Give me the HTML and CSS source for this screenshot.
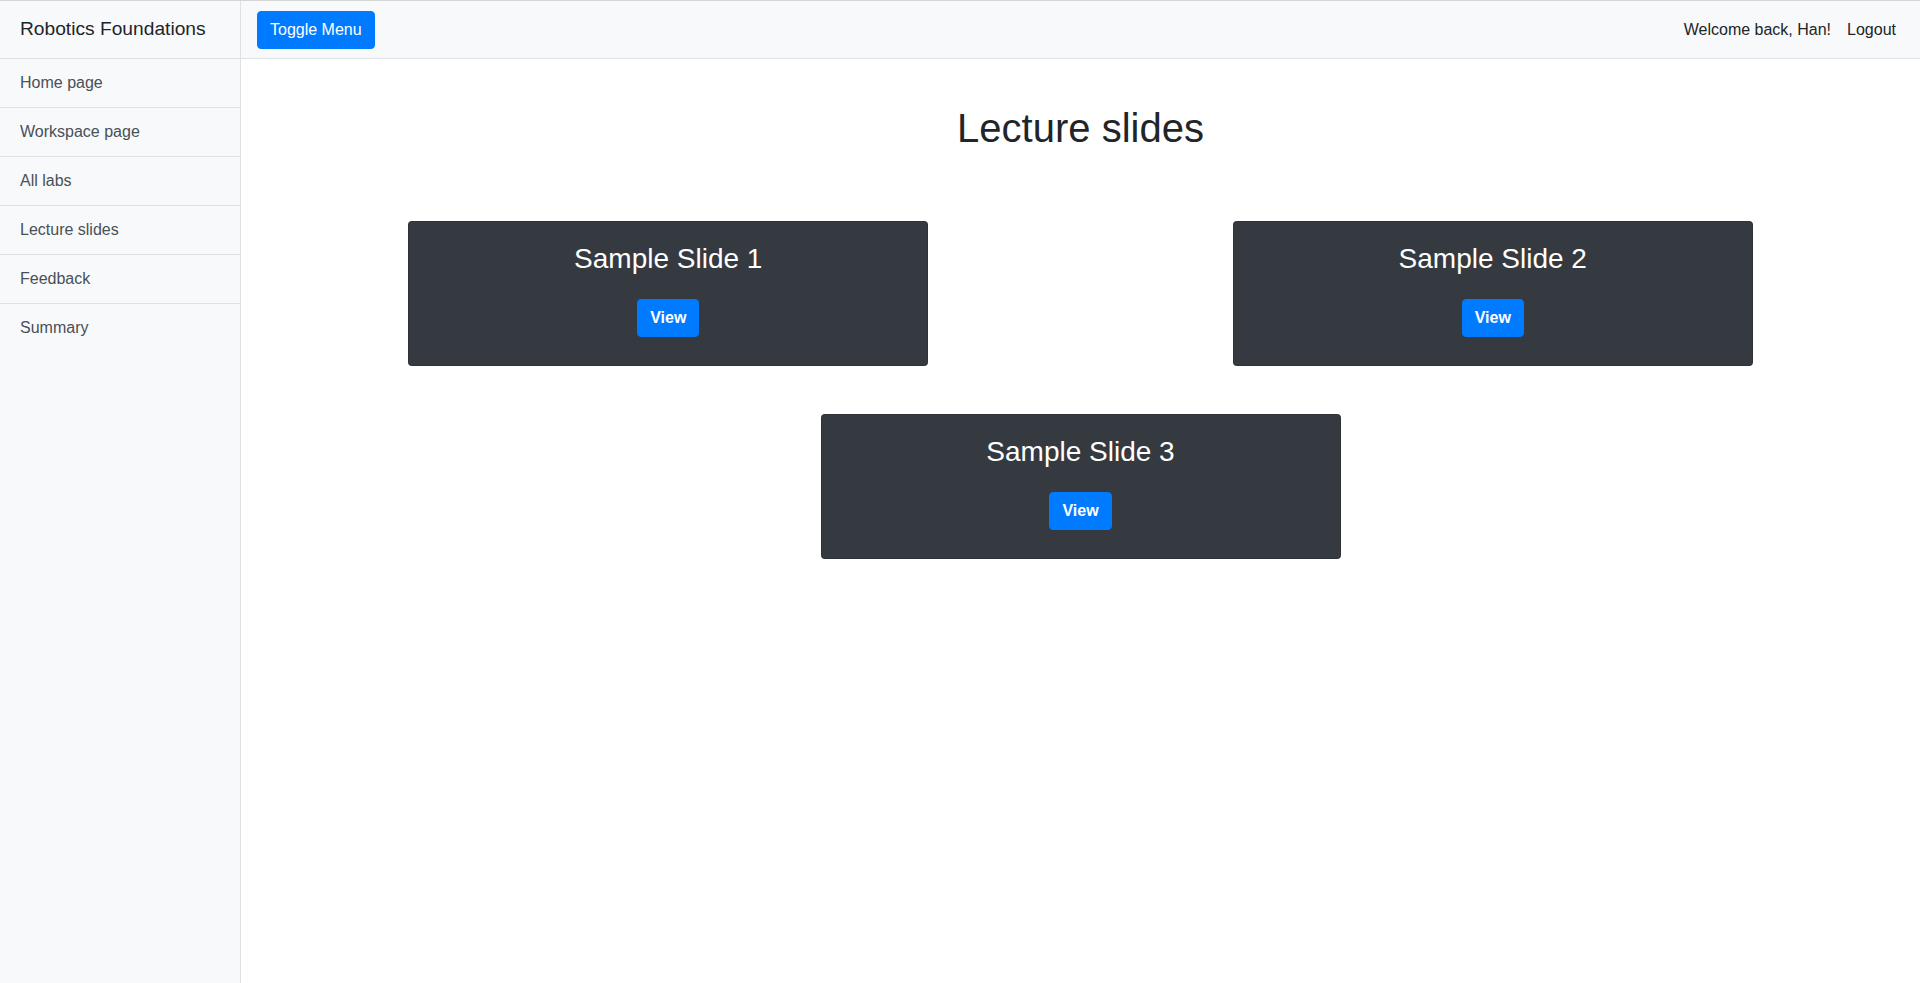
FILE: index.html
```html
<!DOCTYPE html>
<html lang="en">
<head>
<meta charset="utf-8">
<title>Lecture slides</title>
<link rel="stylesheet" href="styles.css">
</head>
<body>
<div class="wrapper">
  <aside class="sidebar">
    <div class="sidebar-heading">Robotics Foundations</div>
    <nav class="side-list">
      <a class="side-item" href="#">Home page</a>
      <a class="side-item" href="#">Workspace page</a>
      <a class="side-item" href="#">All labs</a>
      <a class="side-item" href="#">Lecture slides</a>
      <a class="side-item" href="#">Feedback</a>
      <a class="side-item" href="#">Summary</a>
    </nav>
  </aside>
  <div class="page">
    <header class="topbar">
      <button class="btn btn-primary" type="button">Toggle Menu</button>
      <ul class="topnav">
        <li class="topnav-item">Welcome back, Han!</li>
        <li class="topnav-item"><a class="topnav-link" href="#">Logout</a></li>
      </ul>
    </header>
    <main class="content">
      <h1 class="title">Lecture slides</h1>
      <div class="slides">
        <div class="slide-card">
          <h3 class="slide-title">Sample Slide 1</h3>
          <button class="btn btn-primary btn-bold" type="button">View</button>
        </div>
        <div class="slide-card">
          <h3 class="slide-title">Sample Slide 2</h3>
          <button class="btn btn-primary btn-bold" type="button">View</button>
        </div>
        <div class="slide-card">
          <h3 class="slide-title">Sample Slide 3</h3>
          <button class="btn btn-primary btn-bold" type="button">View</button>
        </div>
      </div>
    </main>
  </div>
</div>
</body>
</html>
```
FILE: styles.css
```css
* {
  box-sizing: border-box;
}

html, body {
  margin: 0;
  padding: 0;
}

body {
  font-family: "Liberation Sans", Arial, sans-serif;
  font-size: 16px;
  line-height: 1.5;
  color: #212529;
  background: #fff;
  border-top: 1px solid #d5d5d5;
}

.wrapper {
  display: flex;
  min-height: 982px;
}

.sidebar {
  width: 241px;
  flex: 0 0 241px;
  background: #f8f9fa;
  border-right: 1px solid #dee2e6;
}

.sidebar-heading {
  height: 57px;
  padding: 0 20px;
  display: flex;
  align-items: center;
  font-size: 19.2px;
  line-height: 28.8px;
  color: #212529;
}

.side-list {
  display: flex;
  flex-direction: column;
}

.side-item {
  display: block;
  height: 49px;
  padding: 12px 20px;
  border-top: 1px solid #dee2e6;
  color: #495057;
  text-decoration: none;
  line-height: 24px;
}

.page {
  flex: 1;
  min-width: 0;
  display: flex;
  flex-direction: column;
}

.topbar {
  height: 58px;
  padding: 0 16px;
  display: flex;
  align-items: center;
  justify-content: space-between;
  background: #f8f9fa;
  border-bottom: 1px solid #dee2e6;
}

.btn {
  display: inline-block;
  font-family: inherit;
  font-size: 16px;
  line-height: 24px;
  padding: 6px 12px;
  border: 1px solid transparent;
  border-radius: 4px;
  cursor: pointer;
}

.btn-primary {
  color: #fff;
  background: #007bff;
  border-color: #007bff;
}

.btn-bold {
  font-weight: 700;
}

.topnav {
  list-style: none;
  margin: 0;
  padding: 0;
  display: flex;
  align-items: center;
}

.topnav-item {
  padding: 8px;
  color: #212529;
}

.topnav-link {
  color: #212529;
  text-decoration: none;
}

.content {
  padding: 0 15px;
}

.title {
  margin: 45px 0 0;
  font-size: 40px;
  line-height: 48px;
  font-weight: 400;
  text-align: center;
  color: #212529;
}

.slides {
  margin-top: 69px;
  display: flex;
  flex-wrap: wrap;
  justify-content: space-around;
  row-gap: 48px;
}

.slide-card {
  width: 520px;
  height: 145px;
  margin: 0 40px;
  padding: 20px 20px 0;
  background: #343a40;
  border: 1px solid rgba(0, 0, 0, 0.125);
  border-radius: 4px;
  text-align: center;
  color: #fff;
}

.slide-title {
  margin: 0 0 23px;
  font-size: 28px;
  line-height: 33.6px;
  font-weight: 400;
}
```
